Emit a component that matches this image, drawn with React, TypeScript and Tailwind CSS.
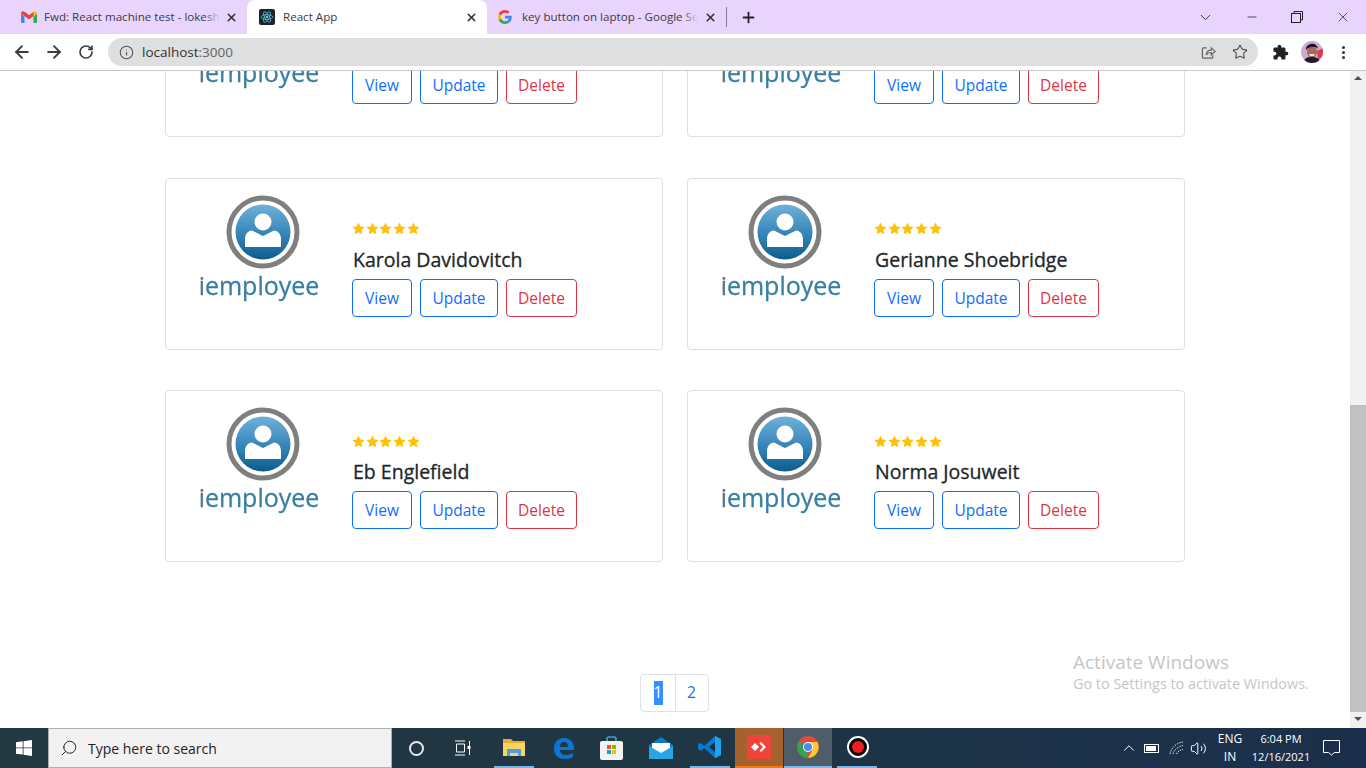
import { ArrowLeft, ArrowRight, ChevronDown, ChevronUp, Info, Minus, Plus, RotateCw, Search, Star, Volume2, X } from "lucide-react";

const sans = { fontFamily: '"Open Sans", "Noto Sans", sans-serif' };

const employees = [
  { id: 1, name: "" },
  { id: 2, name: "" },
  { id: 3, name: "Karola Davidovitch" },
  { id: 4, name: "Gerianne Shoebridge" },
  { id: 5, name: "Eb Englefield" },
  { id: 6, name: "Norma Josuweit" },
];

const GmailIcon = () => (
  <svg width="16" height="12" viewBox="0 0 16 12">
    <path d="M0 2.5V11q0 1 1 1h2.5V5.5z" fill="#4285f4" />
    <path d="M16 2.5V11q0 1-1 1h-2.5V5.5z" fill="#34a853" />
    <path d="M0 2.5C0 .3 2-.5 3.5.8L8 4.3V8z" fill="#ea4335" />
    <path d="M16 2.5C16 .3 14-.5 12.500.8L8 4.3V8z" fill="#fbbc04" />
    <path d="M3.5 1L8 4.3 12.500 1v4L8 8.300 3.500 5z" fill="#ea4335" />
  </svg>
);

const ReactIcon = () => (
  <span className="flex h-4 w-4 items-center justify-center rounded-[2px] bg-[#20232a]">
    <svg width="14" height="14" viewBox="-12 -12 24 24" fill="none" stroke="#61dafb" strokeWidth="1.100">
      <circle r="2" fill="#61dafb" stroke="none" />
      <ellipse rx="10" ry="4" />
      <ellipse rx="10" ry="4" transform="rotate(60)" />
      <ellipse rx="10" ry="4" transform="rotate(120)" />
    </svg>
  </span>
);

const GoogleIcon = () => (
  <svg width="14" height="14" viewBox="0 0 48 48">
    <path fill="#ea4335" d="M24 9.500c3.500 0 6.700 1.300 9.100 3.500l6.800-6.800C35.800 2.400 30.200 0 24 0 14.600 0 6.500 5.400 2.600 13.200l7.900 6.200C12.400 13.700 17.700 9.500 24 9.500z" />
    <path fill="#4285f4" d="M47 24.500c0-1.600-.1-3.100-.4-4.500H24v9h12.900c-.6 3-2.200 5.500-4.700 7.200l7.700 6C44.400 38 47 31.800 47 24.500z" />
    <path fill="#fbbc05" d="M10.500 28.600c-.5-1.400-.8-3-.8-4.600s.3-3.200.8-4.600l-7.900-6.200C.9 16.500 0 20.100 0 24s.9 7.500 2.600 10.800l7.900-6.200z" />
    <path fill="#34a853" d="M24 48c6.500 0 11.900-2.100 15.900-5.800l-7.700-6c-2.200 1.400-4.900 2.300-8.200 2.300-6.300 0-11.600-4.200-13.500-9.900l-7.900 6.200C6.500 42.600 14.600 48 24 48z" />
  </svg>
);

type TabProps = { icon: React.ReactNode; title: string; active?: boolean; width: string; gap: string; pad: string; fade: string };

const Tab = ({ icon, title, active, width, gap, pad, fade }: TabProps) => (
  <div className={`relative flex h-[34px] items-center ${width} ${pad} ${gap} ${active ? "rounded-t-lg bg-white" : ""}`}>
    {icon}
    <span className={`relative overflow-hidden text-[11.6px] whitespace-nowrap text-[#3c3c3c] ${fade}`}>
      {title}
      {!active && <span className="absolute inset-y-0 right-0 w-4 bg-gradient-to-r from-transparent to-[#e9d4fd]" />}
    </span>
    <X size={13} strokeWidth={3} className="absolute right-[9px] top-[11px] text-[#333]" />
  </div>
);

const TabBar = () => (
  <div className="flex h-[34px] items-center bg-[#e9d4fd] pl-[9px]" style={sans}>
    <Tab icon={<GmailIcon />} title="Fwd: React machine test - lokeshk" width="w-[238px]" pad="pl-3" gap="gap-[7px]" fade="w-[176px]" />
    <Tab icon={<ReactIcon />} title="React App" active width="w-[240px]" pad="pl-3" gap="gap-2" fade="w-[180px]" />
    <Tab icon={<GoogleIcon />} title="key button on laptop - Google Search" width="w-[239px]" pad="pl-[11px]" gap="gap-[10px]" fade="w-[176px]" />
    <span className="h-5 w-px bg-[#8a7a99]" />
    <Plus size={17} strokeWidth={2.5} className="ml-[13px] text-[#222]" />
    <div className="ml-auto flex items-center text-[#222]">
      <ChevronDown size={17} strokeWidth={1.3} className="mr-[31px]" />
      <Minus size={14} strokeWidth={1.3} className="mr-8" />
      <svg width="12" height="12" viewBox="0 0 12 12" fill="none" stroke="currentColor" className="mr-8">
        <rect x=".5" y="2.500" width="9" height="9" />
        <path d="M3 2.500V.5h8.500V9H9.500" />
      </svg>
      <X size={16} strokeWidth={1.1} className="mr-[15px]" />
    </div>
  </div>
);

const Avatar = () => (
  <svg width="22" height="22" viewBox="0 0 22 22">
    <defs>
      <clipPath id="avatar-clip">
        <circle cx="11" cy="11" r="11" />
      </clipPath>
    </defs>
    <g clipPath="url(#avatar-clip)">
      <rect width="22" height="22" fill="#c9aed2" />
      <path d="M16 10l6-3v9l-5 2z" fill="#e23a52" />
      <ellipse cx="11" cy="11" rx="5" ry="6" fill="#a56a58" />
      <path d="M5 9C4 2 16 0 17 8c-2-3-9-3-12 1z" fill="#1d1420" />
      <path d="M2 22c1-5 4-6 9-6s8 2 9 6z" fill="#221a2e" />
      <path d="M8 13h6l-1 2H9z" fill="#f1e6e4" />
    </g>
  </svg>
);

const Toolbar = () => (
  <div className="flex h-[37px] items-center border-b border-[#c8c8c8] bg-white text-[#3c3c3c]" style={sans}>
    <ArrowLeft size={20} strokeWidth={2.3} className="ml-3" />
    <ArrowRight size={20} strokeWidth={2.3} className="ml-3" />
    <RotateCw size={16} strokeWidth={2.5} className="ml-[14px]" />
    <div className="ml-[14px] flex h-7 w-[1150px] items-center rounded-full bg-[#dfdfdf] pl-[11px] pr-[10px]">
      <Info size={15} strokeWidth={1.8} className="text-[#555]" />
      <span className="ml-2 text-[13.5px] text-[#333]">
        localhost<span className="text-[#5f6368]">:3000</span>
      </span>
      <svg width="15" height="15" viewBox="0 0 16 16" fill="none" stroke="#666" strokeWidth="1.300" className="ml-auto">
        <path d="M6 3H2.500A1 1 0 0 0 1.500 4v9a1 1 0 0 0 1 1h9a1 1 0 0 0 1-1v-2" />
        <path d="M5.500 10.500C6 7 8.500 5.500 11 5.500V3l4 3.800-4 3.700V8C9 8 7 8.500 5.500 10.500z" />
      </svg>
      <Star size={16} strokeWidth={1.7} className="ml-4 text-[#555]" />
    </div>
    <svg width="17" height="17" viewBox="0 0 24 24" fill="#222" className="ml-[14px]">
      <path d="M20.500 11H19V7c0-1.100-.9-2-2-2h-4V3.500C13 2.120 11.880 1 10.500 1S8 2.120 8 3.500V5H4c-1.100 0-1.990.9-1.990 2v3.800H3.500c1.490 0 2.700 1.210 2.700 2.700s-1.210 2.700-2.700 2.700H2V20c0 1.100.9 2 2 2h3.800v-1.500c0-1.490 1.210-2.700 2.700-2.700 1.490 0 2.700 1.210 2.700 2.700V22H17c1.100 0 2-.9 2-2v-4h1.500c1.380 0 2.500-1.120 2.500-2.500S21.880 11 20.500 11z" />
    </svg>
    <span className="ml-3 flex">
      <Avatar />
    </span>
    <span className="ml-[19px] flex flex-col gap-[2px]">
      <span className="h-[3px] w-[3px] rounded-full bg-[#333]" />
      <span className="h-[3px] w-[3px] rounded-full bg-[#333]" />
      <span className="h-[3px] w-[3px] rounded-full bg-[#333]" />
    </span>
  </div>
);

const Logo = ({ id }: { id: number }) => (
  <div className="flex w-[186px] flex-col items-center">
    <svg width="74" height="74" viewBox="0 0 74 74" className="ml-2 blur-[0.3px]">
      <defs>
        <linearGradient id={`logo-fill-${id}`} x1="0" y1="0" x2="0" y2="1">
          <stop offset="0" stopColor="#6fb0da" />
          <stop offset="0.6" stopColor="#2f80b4" />
          <stop offset="1" stopColor="#0d5c8c" />
        </linearGradient>
      </defs>
      <circle cx="37" cy="37" r="34" fill="#fff" stroke="#7f7f7f" strokeWidth="5" />
      <circle cx="37" cy="37" r="27.5" fill={`url(#logo-fill-${id})`} />
      <circle cx="37" cy="27" r="8.5" fill="#fff" />
      <path d="M19 44c0-5 3-8 7-8.500L37 41l11-5.500c4 .5 7 3.500 7 8.500v8H19z" fill="#fff" />
    </svg>
    <span className="-mt-[1px] text-[25px] leading-[34px] text-[#377fa3] [-webkit-text-stroke:0.3px_#377fa3] blur-[0.3px]">
      <span className="text-[#5d7787] [-webkit-text-stroke:0.3px_#5d7787]">i</span>employee
    </span>
  </div>
);

const Stars = () => (
  <div className="flex h-[14px] items-center gap-[0.7px] text-[#ffc107]">
    {[1, 2, 3, 4, 5].map((n) => (
      <svg key={n} width="13" height="13" viewBox="0 0 24 24" fill="currentColor">
        <path d="M12 1l3.400 7.300 7.900 1-5.800 5.500 1.500 8L12 18.900 5 22.800l1.500-8L.7 9.300l7.900-1z" />
      </svg>
    ))}
  </div>
);

const EmployeeCard = ({ id, name }: { id: number; name: string }) => (
  <div className="flex h-[172px] items-start rounded border border-[#dfdfdf] bg-white pt-4">
    <Logo id={id} />
    <div className="mt-[27px] flex flex-col">
      <Stars />
      <h5 className="mt-[7px] h-9 pl-[1px] text-[19.5px] leading-[33px] font-medium text-[#212529] [-webkit-text-stroke:0.3px_#212529]">{name}</h5>
      <div className="flex gap-2 text-[15.5px]">
        <button className="h-[38px] w-[60px] rounded border border-[#0d6efd] pt-[2px] text-[#0d6efd]">View</button>
        <button className="h-[38px] w-[78px] rounded border border-[#0d6efd] pt-[2px] text-[#0d6efd]">Update</button>
        <button className="h-[38px] w-[71px] rounded border border-[#dc3545] pt-[2px] text-[#dc3545]">Delete</button>
      </div>
    </div>
  </div>
);

const Pagination = () => (
  <div className="mt-[112px] ml-[475px] flex h-[38px] w-[69px] rounded border border-[#dee2e6] text-[15.5px] text-[#0d6efd]">
    <span className="flex w-[35px] items-center justify-center border-r border-[#dee2e6]">
      <span className="flex h-6 w-[9px] items-center justify-center bg-[#3390ff] text-white">1</span>
    </span>
    <span className="flex flex-1 items-center justify-center pr-[1px]">2</span>
  </div>
);

const Scrollbar = () => (
  <div className="flex w-4 flex-col items-center bg-[#f1f1f1]">
    <span className="mt-[5px] h-0 w-0 border-x-4 border-b-4 border-x-transparent border-b-[#505050]" />
    <span className="mt-[325px] h-[307px] w-full bg-[#c1c1c1]" />
    <span className="mt-[5px] h-0 w-0 border-x-4 border-t-4 border-x-transparent border-t-[#505050]" />
  </div>
);

const WindowsLogo = () => (
  <svg width="16" height="16" viewBox="0 0 16 16" fill="#fff">
    <path d="M0 2.300l6.700-1v6.200H0zM7.500 1.200L16 0v7.500H7.500zM0 8.300h6.700v6.300L0 13.700zM7.500 8.300H16V16l-8.500-1.200z" />
  </svg>
);

const TaskIcon = ({ children, width, className }: { children: React.ReactNode; width: string; className: string }) => (
  <div className={`flex h-10 items-center justify-center border-b-2 ${width} ${className}`}>{children}</div>
);

const Taskbar = () => (
  <div
    className="flex h-10 items-center bg-gradient-to-r from-[#243a42] via-[#1f3644] to-[#1b2f4c] text-white"
    style={sans}
  >
    <span className="flex w-12 justify-center">
      <WindowsLogo />
    </span>
    <div className="flex h-10 w-[344px] items-center border border-[#a9b1b5] bg-[#f2f2f2] pl-[11px] text-[#222]">
      <Search size={18} strokeWidth={1.3} className="-scale-x-100" />
      <span className="ml-[10px] text-[14px]">Type here to search</span>
    </div>
    <span className="ml-[17px] h-[15px] w-[15px] rounded-full border-2 border-[#e8e8e8]" />
    <svg width="18" height="16" viewBox="0 0 18 16" fill="none" stroke="#fff" className="ml-[30px]">
      <path d="M1 1h10M1 15h10M2.500 4h8v8h-8zM15.500 1v14" />
      <rect x="13.500" y="6" width="3" height="3" fill="#fff" stroke="none" />
    </svg>
    <div className="ml-[22px] flex items-center">
      <TaskIcon width="w-10" className="border-[#76b9ed]">
        <svg width="22" height="20" viewBox="0 0 22 20">
          <path d="M0 2h8l2 2h12v15H0z" fill="#e3b033" />
          <path d="M0 6h22v13H0z" fill="#f9d465" />
          <path d="M4 19v-7h14v7h-3v-3H7v3z" fill="#4a9fdc" />
        </svg>
      </TaskIcon>
      <div className="flex h-10 w-[58px] items-center justify-center">
        <svg width="21" height="22" viewBox="0 0 21 22">
          <path d="M1 12C1 5 5 1 11 1c6 0 10 4 10 11v1H7c0 3 2 5 6 5 3 0 5-1 7-2v4c-2 1-5 2-8 2C5 22 1 18 1 12zm6-2h8c0-3-1-5-4-5s-4 2-4 5z" fill="#0b76d4" />
        </svg>
      </div>
      <div className="flex h-10 w-[38px] items-center justify-center">
        <svg width="23" height="24" viewBox="0 0 23 24">
          <path d="M7 6V3q0-2 2-2h5q2 0 2 2v3" fill="none" stroke="#35a7e0" strokeWidth="1.600" />
          <rect y="5" width="23" height="19" rx="2" fill="#f3f3f3" />
          <rect x="7" y="9" width="4" height="4" fill="#f25022" />
          <rect x="12" y="9" width="4" height="4" fill="#7fba00" />
          <rect x="7" y="14" width="4" height="4" fill="#00a4ef" />
          <rect x="12" y="14" width="4" height="4" fill="#ffb900" />
        </svg>
      </div>
      <div className="flex h-10 w-[60px] items-center justify-center pl-[1px]">
        <svg width="24" height="22" viewBox="0 0 24 22">
          <path d="M0 8L12 0l12 8v14H0z" fill="#0f78c8" />
          <path d="M3 6h18v8l-9 5-9-5z" fill="#fff" />
          <path d="M0 9l12 7 12-7v13H0z" fill="#29a4e6" />
        </svg>
      </div>
      <TaskIcon width="w-10" className="border-[#76b9ed]">
        <svg width="24" height="24" viewBox="0 0 24 24">
          <path d="M17 1l6 3v16l-6 3L6 13l-3 3-3-2V9l3-1 3 3z" fill="#0a78cd" />
          <path d="M17 1l6 3v16l-6 3z" fill="#22a2ee" />
          <path d="M17 7l-6 5 6 5z" fill="#1b2f42" />
        </svg>
      </TaskIcon>
      <TaskIcon width="ml-[5px] w-12" className="border-[#f07a10] bg-[#a5622f]">
        <span className="flex h-6 w-6 items-center justify-center bg-[#ef443b]">
          <svg width="16" height="10" viewBox="0 0 16 10" fill="#fff">
            <path d="M4 1l4 4-4 4-4-4zM10 0l5 5-5 5-1.500-1.500L12 5 8.500 1.500z" />
          </svg>
        </span>
      </TaskIcon>
      <TaskIcon width="ml-[1px] w-12" className="border-[#76b9ed] bg-[#4f5d68]">
        <svg width="22" height="22" viewBox="0 0 22 22">
          <circle cx="11" cy="11" r="11" fill="#dd4b3e" />
          <path d="M11 11L1.500 5.500A11 11 0 0 0 11 22z" fill="#33a252" />
          <path d="M11 6h9.500A11 11 0 0 1 11 22l4.500-8z" fill="#fcc934" />
          <circle cx="11" cy="11" r="5" fill="#fff" />
          <circle cx="11" cy="11" r="4" fill="#4c8bf5" />
        </svg>
      </TaskIcon>
      <TaskIcon width="ml-[5px] w-10 pl-[1px]" className="border-[#76b9ed]">
        <span className="flex h-[22px] w-[22px] items-center justify-center rounded-full border-2 border-white bg-black">
          <span className="h-3 w-3 rounded-full bg-[#f01c24]" />
        </span>
      </TaskIcon>
    </div>
    <ChevronUp size={18} strokeWidth={1.3} className="ml-[243px]" />
    <span className="relative ml-[6px] h-[9px] w-[15px] border border-white p-[1px]">
      <span className="block h-full w-[10px] bg-white" />
    </span>
    <svg width="15" height="14" viewBox="0 0 15 14" fill="none" stroke="#dfe3e6" className="ml-[10px]">
      <path d="M1 13C2 7 7 2 14 1M4 13c1-4 4-7 10-8.500M7.500 13c.5-2 3-4 6.500-4.500" strokeDasharray="1.500 1" />
    </svg>
    <Volume2 size={17} strokeWidth={1.4} className="ml-[6px]" />
    <div className="ml-2 flex w-[30px] flex-col items-center text-[12px] leading-[18px]">
      <span>ENG</span>
      <span>IN</span>
    </div>
    <div className="flex w-[72px] flex-col items-center text-[11px] leading-[18px]">
      <span>6:04 PM</span>
      <span>12/16/2021</span>
    </div>
    <svg width="17" height="16" viewBox="0 0 17 16" fill="none" stroke="#fff" className="ml-[6px]">
      <path d="M.5.5h16v12h-5l-3 2.500-3-2.500h-5z" />
    </svg>
  </div>
);

export default function App() {
  return (
    <div className="flex h-[768px] w-[1366px] flex-col overflow-hidden bg-white" style={sans}>
      <TabBar />
      <Toolbar />
      <div className="relative flex h-[657px]">
        <main className="flex-1 overflow-hidden">
          <div className="-mt-[106px] ml-[165px] w-[1020px]">
            <div className="grid grid-cols-2 gap-x-6 gap-y-[40.5px]">
              {employees.map((e) => (
                <EmployeeCard key={e.id} id={e.id} name={e.name} />
              ))}
            </div>
            <Pagination />
          </div>
        </main>
        <Scrollbar />
        <div className="absolute top-[579px] left-[1073px] text-[#c6c6c6]">
          <p className="text-[19px] leading-6">Activate Windows</p>
          <p className="text-[14.4px] leading-5">Go to Settings to activate Windows.</p>
        </div>
      </div>
      <Taskbar />
    </div>
  );
}
